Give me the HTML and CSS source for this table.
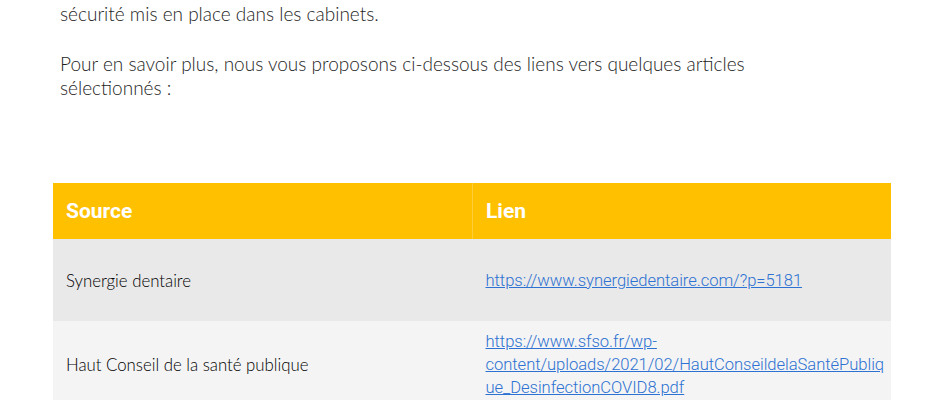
FILE: index.html
```html
<!DOCTYPE html>
<html lang="fr">
<head>
<meta charset="utf-8">
<link rel="stylesheet" href="styles.css">
</head>
<body>
<div class="page">
  <p class="para">sécurité mis en place dans les cabinets.</p>
  <p class="para">Pour en savoir plus, nous vous proposons ci-dessous des liens vers quelques articles<br>sélectionnés :</p>
  <table class="refs">
    <thead>
      <tr><th class="col-src">Source</th><th class="col-link">Lien</th></tr>
    </thead>
    <tbody>
      <tr class="row-a">
        <td class="cell-src">Synergie dentaire</td>
        <td class="cell-link"><a href="#">https://www.synergiedentaire.com/?p=5181</a></td>
      </tr>
      <tr class="row-b">
        <td class="cell-src">Haut Conseil de la santé publique</td>
        <td class="cell-link"><a href="#">https://www.sfso.fr/wp-<br>content/uploads/2021/02/HautConseildelaSantéPubliq<br>ue_DesinfectionCOVID8.pdf</a></td>
      </tr>
    </tbody>
  </table>
</div>
</body>
</html>
```
FILE: styles.css
```css
html, body {
  margin: 0;
  padding: 0;
  background: #ffffff;
}
.page {
  padding: 2px 49px 0 53px;
}
.para {
  margin: 0 0 26px 7px;
  font-family: "Lato", sans-serif;
  font-weight: 300;
  font-size: 19px;
  line-height: 24px;
  color: #1e1e1e;
}
.refs {
  margin-top: 83px;
  width: 838px;
  border-collapse: collapse;
  table-layout: fixed;
}
.refs th {
  background: #ffc000;
  color: #ffffff;
  font-family: "Roboto", sans-serif;
  font-weight: 700;
  font-size: 21px;
  text-align: left;
  height: 56px;
  padding: 0 13px;
}
.refs th.col-src {
  width: 393px;
  border-right: 1px solid #ffcd3a;
}
.refs td {
  font-family: "Lato", sans-serif;
  font-weight: 300;
  font-size: 16.8px;
  color: #000000;
  padding: 0 8px 0 13px;
  vertical-align: middle;
}
.row-a td {
  background: #e9e9e9;
  height: 82px;
}
.row-b td {
  background: #f4f4f4;
  height: 86px;
}
.cell-link {
  white-space: nowrap;
}
.cell-link a {
  font-family: "Roboto", sans-serif;
  font-weight: 300;
  font-size: 16.6px;
  letter-spacing: -0.05px;
  color: #2d72d2;
  line-height: 22px;
}
```
